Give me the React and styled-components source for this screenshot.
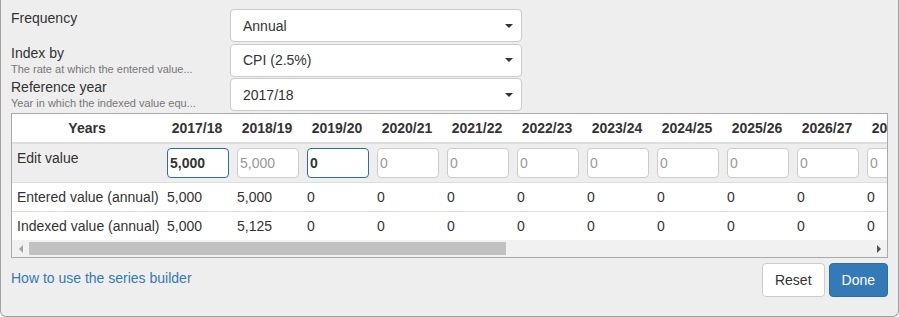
import React from 'react';
import styled, { createGlobalStyle, css } from 'styled-components';

const Global = createGlobalStyle`
  html, body { margin: 0; padding: 0; background: #fff; }
  body {
    font-family: Arial, "Liberation Sans", Helvetica, sans-serif;
    font-size: 14px;
    color: #333;
  }
  * { box-sizing: border-box; }
`;

const Panel = styled.div`
  width: 899px;
  height: 317px;
  background: #eee;
  border: 1px solid #a0a0a0;
  border-top: none;
  border-radius: 0 0 6px 6px;
  padding: 9px 10px 0 10px;
  display: flex;
  flex-direction: column;
  overflow: hidden;
`;

const Form = styled.div`
  display: grid;
  grid-template-columns: 219px 292px;
  row-gap: 1.5px;
  align-items: start;
`;

const LabelBlock = styled.div`
  display: flex;
  flex-direction: column;
`;

const LabelText = styled.div`
  font-size: 14px;
  line-height: 18px;
  color: #333;
`;

const Hint = styled.div`
  font-size: 11px;
  line-height: 14px;
  color: #777;
  white-space: nowrap;
`;

const Select = styled.div`
  height: 33px;
  background: #fff;
  border: 1px solid #ccc;
  border-radius: 4px;
  padding: 0 8px 0 12px;
  display: flex;
  align-items: center;
  justify-content: space-between;
  font-size: 14px;
  color: #333;
`;

const Caret = styled.span`
  width: 0;
  height: 0;
  border-left: 4px solid transparent;
  border-right: 4px solid transparent;
  border-top: 4px solid #333;
`;

const TableBox = styled.div`
  margin-top: 2px;
  border: 1px solid #aaa;
  background: #fff;
  overflow: hidden;
`;

const ScrollArea = styled.div`
  overflow: hidden;
  width: 100%;
`;

const Table = styled.table`
  border-collapse: separate;
  border-spacing: 0;
  table-layout: fixed;
  width: ${p => p.$width}px;
`;

const HeadCell = styled.th`
  width: ${p => p.$w}px;
  padding: 5px;
  line-height: 18px;
  font-size: 14px;
  font-weight: bold;
  text-align: center;
  color: #333;
  border-bottom: 2px solid #ddd;
  white-space: nowrap;
  overflow: hidden;
`;

const EditRow = styled.tr`
  background: #eee;
`;

const EditLabel = styled.td`
  padding: 5px;
  line-height: 18px;
  vertical-align: top;
  white-space: nowrap;
`;

const EditCell = styled.td`
  padding: 4px 5px;
  vertical-align: top;
`;

const ValueInput = styled.input`
  display: block;
  width: 62px;
  height: 30px;
  margin: 0;
  border: 1px solid #ccc;
  border-radius: 4px;
  padding: 0 2px;
  font-family: Arial, "Liberation Sans", Helvetica, sans-serif;
  font-size: 14px;
  color: #555;
  background: #fff;
  outline: none;
  &::placeholder { color: #999; }
  ${p => p.$entered && css`
    border-color: #2e6da4;
    font-weight: bold;
    color: #333;
  `}
`;

const DataCell = styled.td`
  padding: 5px;
  line-height: 18px;
  border-top: 1px solid #ddd;
  white-space: nowrap;
  color: #333;
`;

const Scrollbar = styled.div`
  height: 17px;
  background: #f1f1f1;
  display: flex;
`;

const ArrowButton = styled.div`
  width: 17px;
  height: 17px;
  display: flex;
  align-items: center;
  justify-content: center;
  flex: none;
`;

const ArrowGlyph = styled.span`
  width: 0;
  height: 0;
  border-top: 4px solid transparent;
  border-bottom: 4px solid transparent;
  ${p => p.$dir === 'left'
    ? css`border-right: 4px solid ${p.$active ? '#505050' : '#a3a3a3'};`
    : css`border-left: 4px solid ${p.$active ? '#505050' : '#a3a3a3'};`}
`;

const Track = styled.div`
  flex: 1;
  display: flex;
  align-items: center;
`;

const Thumb = styled.div`
  height: 13px;
  background: #c1c1c1;
`;

const Footer = styled.div`
  margin-top: 5px;
  display: flex;
  justify-content: space-between;
  align-items: flex-start;
`;

const HelpLink = styled.a`
  margin-top: 5px;
  font-size: 14px;
  line-height: 20px;
  color: #337ab7;
  text-decoration: none;
`;

const Buttons = styled.div`
  display: flex;
  gap: 4px;
`;

const Button = styled.button`
  height: 34px;
  padding: 6px 12px;
  font-family: Arial, "Liberation Sans", Helvetica, sans-serif;
  font-size: 14px;
  line-height: 20px;
  border-radius: 4px;
  border: 1px solid ${p => (p.$primary ? '#2e6da4' : '#ccc')};
  background: ${p => (p.$primary ? '#337ab7' : '#fff')};
  color: ${p => (p.$primary ? '#fff' : '#333')};
  cursor: pointer;
`;

const years = Array.from({ length: 20 }, (_, i) => {
  const a = 2017 + i;
  return `${a}/${String((a + 1) % 100).padStart(2, '0')}`;
});

const edits = years.map((_, i) => {
  if (i === 0) return { value: '5,000', entered: true };
  if (i === 1) return { placeholder: '5,000' };
  if (i === 2) return { value: '0', entered: true };
  return { placeholder: '0' };
});

const entered = years.map((_, i) => (i < 2 ? '5,000' : '0'));
const indexed = years.map((_, i) => (i === 0 ? '5,000' : i === 1 ? '5,125' : '0'));

const FIRST_COL = 150;
const YEAR_COL = 70;

export default function App() {
  const tableWidth = FIRST_COL + years.length * YEAR_COL;
  const visible = 880;
  const thumbPct = (visible / tableWidth) * 100;

  return (
    <>
      <Global />
      <Panel>
        <Form>
          <LabelBlock>
            <LabelText>Frequency</LabelText>
          </LabelBlock>
          <Select>
            <span>Annual</span>
            <Caret />
          </Select>
          <LabelBlock>
            <LabelText>Index by</LabelText>
            <Hint>The rate at which the entered value...</Hint>
          </LabelBlock>
          <Select>
            <span>CPI (2.5%)</span>
            <Caret />
          </Select>
          <LabelBlock>
            <LabelText>Reference year</LabelText>
            <Hint>Year in which the indexed value equ...</Hint>
          </LabelBlock>
          <Select>
            <span>2017/18</span>
            <Caret />
          </Select>
        </Form>

        <TableBox>
          <ScrollArea>
            <Table $width={tableWidth}>
              <thead>
                <tr>
                  <HeadCell $w={FIRST_COL}>Years</HeadCell>
                  {years.map(y => (
                    <HeadCell key={y} $w={YEAR_COL}>{y}</HeadCell>
                  ))}
                </tr>
              </thead>
              <tbody>
                <EditRow>
                  <EditLabel>Edit value</EditLabel>
                  {edits.map((e, i) => (
                    <EditCell key={i}>
                      <ValueInput
                        $entered={e.entered}
                        defaultValue={e.value || ''}
                        placeholder={e.placeholder || ''}
                        readOnly
                      />
                    </EditCell>
                  ))}
                </EditRow>
                <tr>
                  <DataCell>Entered value (annual)</DataCell>
                  {entered.map((v, i) => <DataCell key={i}>{v}</DataCell>)}
                </tr>
                <tr>
                  <DataCell>Indexed value (annual)</DataCell>
                  {indexed.map((v, i) => <DataCell key={i}>{v}</DataCell>)}
                </tr>
              </tbody>
            </Table>
          </ScrollArea>
          <Scrollbar>
            <ArrowButton><ArrowGlyph $dir="left" /></ArrowButton>
            <Track>
              <Thumb style={{ width: `${thumbPct}%` }} />
            </Track>
            <ArrowButton><ArrowGlyph $dir="right" $active /></ArrowButton>
          </Scrollbar>
        </TableBox>

        <Footer>
          <HelpLink href="#">How to use the series builder</HelpLink>
          <Buttons>
            <Button>Reset</Button>
            <Button $primary>Done</Button>
          </Buttons>
        </Footer>
      </Panel>
    </>
  );
}
